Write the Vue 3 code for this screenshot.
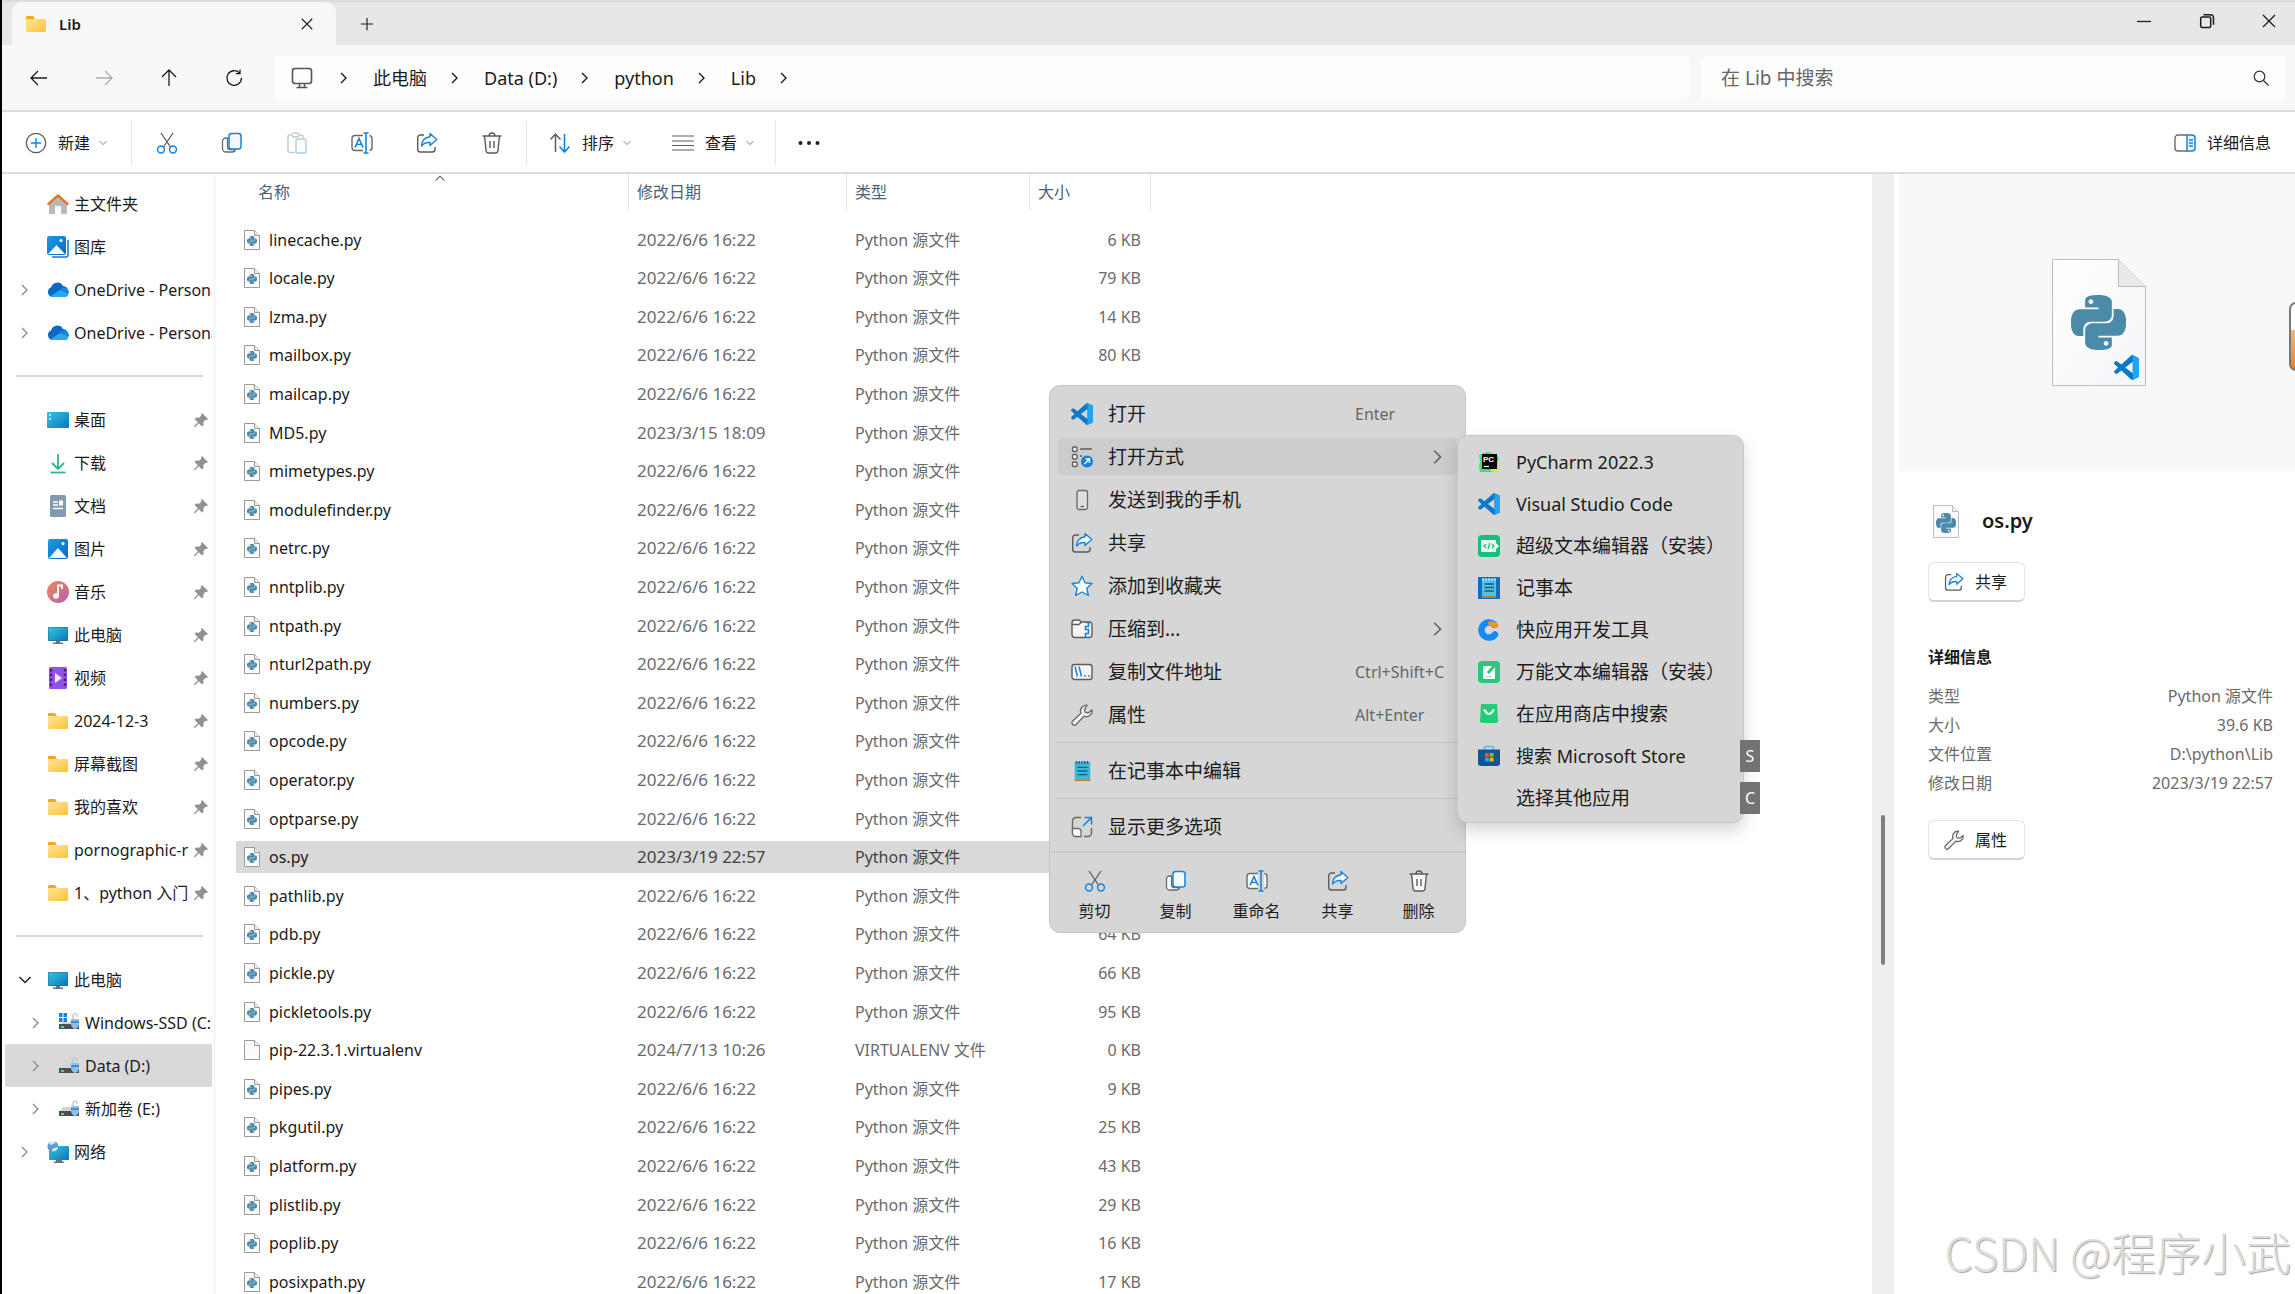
<template>
  <div class="explorer">
    <svg class="sprite" aria-hidden="true">
      <defs>
        <linearGradient id="g-folder" x1="0" y1="0" x2="1" y2="1"><stop offset="0" stop-color="#ffe49a" /><stop offset="1" stop-color="#fcc436" /></linearGradient>
        <linearGradient id="g-blue" x1="0" y1="0" x2="1" y2="1"><stop offset="0" stop-color="#1b9de8" /><stop offset="1" stop-color="#0b66c3" /></linearGradient>
        <linearGradient id="g-teal" x1="0" y1="0" x2="1" y2="1"><stop offset="0" stop-color="#2fc9e0" /><stop offset="1" stop-color="#0f74bb" /></linearGradient>
        <linearGradient id="g-music" x1="0" y1="0" x2="1" y2="1"><stop offset="0" stop-color="#f08a55" /><stop offset="1" stop-color="#b55fae" /></linearGradient>
        <linearGradient id="g-page" x1="0" y1="0" x2="1" y2="1"><stop offset="0" stop-color="#ffffff" /><stop offset="1" stop-color="#f3f6f9" /></linearGradient>
      </defs>
      <symbol id="folder" viewBox="0 0 22 18"><path d="M1 2a1 1 0 0 1 1-1h6l2 3H1z" fill="#eeaa1e" /><path d="M1 4h19a1 1 0 0 1 1 1v11a1 1 0 0 1-1 1H2a1 1 0 0 1-1-1z" fill="url(#g-folder)" /></symbol>
      <symbol id="home" viewBox="0 0 22 22"><path d="M2 10.500 11 3l9 7.500V21h-6v-8H8v8H2z" fill="#b9b9b9" /><path d="M1.500 11 11 2.500l9.500 8.500" fill="none" stroke="#e2762a" stroke-width="2.400" stroke-linecap="round" stroke-linejoin="round" /></symbol>
      <symbol id="gallery" viewBox="0 0 22 22"><path d="M21 4v15a2 2 0 0 1-2 2H5" fill="none" stroke="#1a76c8" stroke-width="1.500" /><rect width="19" height="19" rx="2" fill="url(#g-blue)" /><path d="m1 18 8.500-9 8.500 9z" fill="#f2f8ff" /><circle cx="14" cy="4.500" r="1.500" fill="#fff" /></symbol>
      <symbol id="picture" viewBox="0 0 22 22"><rect x="1" y="1" width="20" height="20" rx="2" fill="url(#g-blue)" /><path d="m2 20 9-10 9 10z" fill="#f2f8ff" /><circle cx="16" cy="5.500" r="1.500" fill="#fff" /></symbol>
      <symbol id="cloud" viewBox="0 0 22 22"><path d="M5 18a5 5 0 0 1-1-9.500 6.500 6.500 0 0 1 12-1.500 5.600 5.600 0 0 1 1 11z" fill="#0a69c4" /><path d="M3 17.500 13 11l8.500 3.200A3.700 3.700 0 0 1 18 18H5a5 5 0 0 1-2-.5z" fill="#2ba7ee" /><path d="M13 11c2-3.500 7-3 8.500.5.700 1.500.500 2.500 0 3z" fill="#1687da" /></symbol>
      <symbol id="desktop" viewBox="0 0 22 22"><rect x="0" y="3" width="22" height="16" rx="1" fill="url(#g-teal)" /><path d="M2 5h2v2H2zM2 9h2v2H2z" fill="#d6f6ff" opacity=".8" /></symbol>
      <symbol id="download" viewBox="0 0 22 22"><path d="M11 2v14M5 11l6 6 6-6" fill="none" stroke="#2cb58c" stroke-width="1.800" /><path d="M3.500 20.500h15" stroke="#2cb58c" stroke-width="1.800" /></symbol>
      <symbol id="document" viewBox="0 0 22 22"><rect x="3" y="0" width="16" height="22" rx="1.500" fill="#8399b1" /><path d="M6 7h5M6 10h5M6 13.500h10" stroke="#fff" stroke-width="1.400" /><rect x="12" y="5.500" width="4" height="5" fill="#fff" /></symbol>
      <symbol id="music" viewBox="0 0 22 22"><circle cx="11" cy="11" r="11" fill="url(#g-music)" /><circle cx="9" cy="15" r="2.800" fill="#fff" /><path d="M11 15V4.500h4V8" fill="none" stroke="#fff" stroke-width="1.800" /></symbol>
      <symbol id="pc" viewBox="0 0 22 22"><rect x="1" y="3" width="20" height="14" rx="1" fill="#3f5f73" /><rect x="1.500" y="3.500" width="19" height="13" fill="url(#g-teal)" /><path d="M9 17h4v1.500h3V20H6v-1.500h3z" fill="#66737c" /></symbol>
      <symbol id="video" viewBox="0 0 22 22"><rect x="2" y="0" width="18" height="22" rx="1.500" fill="#9351e6" /><path d="M4 2v18M18 2v18" stroke="#42207f" stroke-width="2.400" stroke-dasharray="2.400 2.400" /><path d="m8 6 7 5-7 5z" fill="#f3eaff" /></symbol>
      <symbol id="pin" viewBox="0 0 16 16"><path d="m9 1 6 6-1.200 1-1.200-.2-2.200 2.300.1 3-1.500 1.400-3.200-3.200L2 15l-1 .2L1.200 14l3.700-3.700L1.600 7l1.400-1.400 3 .2 2.400-2.400L8 2z" fill="#8f9192" /></symbol>
      <symbol id="drive" viewBox="0 0 22 22"><path d="m5 9-4 5h20V9z" fill="#d2d4d6" /><rect x="1" y="13" width="20" height="5" fill="#4a4f52" /><path d="M3 15h3v2H3z" fill="#4fe052" /><path d="M13 8h8v6q-1 3-4 4-3-1-4-4z" fill="#8fbfe2" /><path d="M13 11h8" stroke="#3f8ecb" stroke-width="2" /><path d="M15 8V5a2 2 0 0 1 4 0v1" fill="none" stroke="#b8bcbf" stroke-width="1.200" /></symbol>
      <symbol id="windrive" viewBox="0 0 22 22"><path d="m5 10-4 3h20V9z" fill="#d2d4d6" /><path d="M1 1h3.500v4H1zM5.500 1H9v4H5.500zM1 6h3.500v4H1zM5.500 6H9v4H5.500z" fill="#1584dc" /><rect x="1" y="12" width="20" height="5" fill="#4a4f52" /><path d="M3 14h3v2H3z" fill="#4fe052" /><path d="M13 7h8v6q-1 3-4 4-3-1-4-4z" fill="#8fbfe2" /><path d="M13 10h8" stroke="#3f8ecb" stroke-width="2" /><path d="M15 7V3.500a2 2 0 0 1 4 0V5" fill="none" stroke="#b8bcbf" stroke-width="1.200" /></symbol>
      <symbol id="network" viewBox="0 0 22 22"><rect x="2" y="5" width="20" height="14" rx="1" fill="url(#g-teal)" /><path d="M9 19h6v1.500h2V22H7v-1.500h2z" fill="#66737c" /><circle cx="6" cy="5.500" r="5.500" fill="#5f9fca" /><path d="M2 2.500C4 5 7 3 9 1c-3-2-6-1-7 1.500zM5 10c0-3 3-3 6-4-.5 3-3 5-6 4z" fill="#d8edf7" /></symbol>
      <symbol id="right" viewBox="0 0 16 16"><path d="m5 3 5 5-5 5" fill="none" stroke="currentColor" stroke-width="1.400" /></symbol>
      <symbol id="down" viewBox="0 0 16 16"><path d="m2.500 5 5.500 5.500L13.500 5" fill="none" stroke="currentColor" stroke-width="1.500" /></symbol>
      <symbol id="up" viewBox="0 0 16 16"><path d="m3 11 5-5 5 5" fill="none" stroke="currentColor" stroke-width="1.200" /></symbol>

      <symbol id="back" viewBox="0 0 20 20"><path d="M18 10H2M9 3 2 10l7 7" fill="none" stroke="currentColor" stroke-width="1.300" /></symbol>
      <symbol id="forward" viewBox="0 0 20 20"><path d="M2 10h16M11 3l7 7-7 7" fill="none" stroke="currentColor" stroke-width="1.300" /></symbol>
      <symbol id="upward" viewBox="0 0 20 20"><path d="M10 18V2M3 9l7-7 7 7" fill="none" stroke="currentColor" stroke-width="1.300" /></symbol>
      <symbol id="refresh" viewBox="0 0 20 20"><path d="M15.500 5A7.300 7.300 0 1 0 17.500 10M16 1.500v4.200h-4.200" fill="none" stroke="currentColor" stroke-width="1.300" /></symbol>
      <symbol id="monitor" viewBox="0 0 22 22"><rect x="1.500" y="1.500" width="19" height="15" rx="2.500" fill="none" stroke="#555" stroke-width="1.600" /><path d="M8.500 17v3M13.500 17v3M5.500 20.500h11" stroke="#555" stroke-width="1.500" /></symbol>
      <symbol id="close" viewBox="0 0 16 16"><path d="m2 2 12 12M14 2 2 14" stroke="currentColor" stroke-width="1.300" /></symbol>
      <symbol id="plus" viewBox="0 0 16 16"><path d="M8 1v14M1 8h14" stroke="currentColor" stroke-width="1.300" /></symbol>
      <symbol id="minimize" viewBox="0 0 16 16"><path d="M1 8.500h14" stroke="currentColor" stroke-width="1.300" /></symbol>
      <symbol id="restore" viewBox="0 0 16 16"><rect x="1.700" y="4" width="10" height="10.500" rx="1.500" fill="none" stroke="currentColor" stroke-width="1.500" /><path d="M4.500 1.700h7a3 3 0 0 1 3 3v7" fill="none" stroke="currentColor" stroke-width="1.500" /></symbol>
      <symbol id="search" viewBox="0 0 16 16"><circle cx="6.500" cy="6.500" r="5.300" fill="none" stroke="#333" stroke-width="1.200" /><path d="m10.500 10.500 5 5" stroke="#333" stroke-width="1.200" /></symbol>

      <symbol id="new" viewBox="0 0 22 22"><circle cx="11" cy="11" r="9.700" fill="none" stroke="#5c5c5c" stroke-width="1.300" /><path d="M11 6v10M6 11h10" stroke="#1583dc" stroke-width="1.400" /></symbol>
      <symbol id="cut" viewBox="0 0 22 22"><path d="M5 1l9.500 14M17 1 7.500 15" stroke="#5c5c5c" stroke-width="1.300" /><circle cx="5" cy="17.500" r="3.400" fill="none" stroke="#1583dc" stroke-width="1.500" /><circle cx="17" cy="17.500" r="3.400" fill="none" stroke="#1583dc" stroke-width="1.500" /></symbol>
      <symbol id="copy" viewBox="0 0 22 22"><path d="M6.500 6H5a3.500 3.500 0 0 0-3.500 3.500v7A3.500 3.500 0 0 0 5 20h6a3.500 3.500 0 0 0 3.500-2.500H9a2.500 2.500 0 0 1-2.500-2.500z" fill="#fff" stroke="#6a6a6a" stroke-width="1.300" /><rect x="8" y="1.500" width="12" height="15.500" rx="2.500" fill="#f4faff" stroke="#1583dc" stroke-width="1.500" /></symbol>
      <symbol id="paste" viewBox="0 0 22 22"><path d="M9 20.500H4A2 2 0 0 1 2 18V5a2 2 0 0 1 2-2h11a2 2 0 0 1 2 2v1" fill="none" stroke="#c9c9c9" stroke-width="1.400" /><rect x="6" y="1" width="7" height="4" rx="2" fill="#fff" stroke="#c9c9c9" stroke-width="1.300" /><rect x="10" y="7" width="10" height="14" rx="1.800" fill="#fff" stroke="#a9d0ef" stroke-width="1.400" /></symbol>
      <symbol id="rename" viewBox="0 0 22 22"><path d="M12 3.500H4A3 3 0 0 0 1 6.500v9a3 3 0 0 0 3 3h8M18.500 3.500a3 3 0 0 1 2.500 3v9a3 3 0 0 1-2.500 3" fill="#fff" stroke="#6a6a6a" stroke-width="1.400" /><path d="m4 15.500 4-9 4 9M5.500 12.500h5M12.500 1h5M12.500 21h5M15 1v20" fill="none" stroke="#1583dc" stroke-width="1.600" /></symbol>
      <symbol id="share" viewBox="0 0 22 22"><path d="M8 3H4.500A2.800 2.800 0 0 0 1.700 5.800v11.400A2.800 2.800 0 0 0 4.500 20h11.700a2.800 2.800 0 0 0 2.800-2.800V15" fill="none" stroke="#5c5c5c" stroke-width="1.400" /><path d="M14 1.500 20.800 7.500 14 13.500V10.500c-4-.3-6.500.8-8.500 3.500.3-5 3-8.500 8.500-9.200z" fill="#f4faff" stroke="#1583dc" stroke-width="1.400" stroke-linejoin="round" /></symbol>
      <symbol id="trash" viewBox="0 0 22 22"><path d="M3.500 4 5 18.500A2.500 2.500 0 0 0 7.500 21h7a2.500 2.500 0 0 0 2.500-2.500L18.500 4" fill="#f7f7f7" stroke="#5c5c5c" stroke-width="1.400" /><path d="M1.500 4h19M8 4a3 3 0 0 1 6 0M9 9v7M13 9v7" fill="none" stroke="#5c5c5c" stroke-width="1.400" /></symbol>
      <symbol id="sort" viewBox="0 0 22 22"><path d="M6.500 20V2M1.500 7.500 6.500 2l5 5.500" fill="none" stroke="#5c5c5c" stroke-width="1.500" /><path d="M15.500 2v18M10.500 14.500l5 5.500 5-5.500" fill="none" stroke="#1583dc" stroke-width="1.600" /></symbol>
      <symbol id="view" viewBox="0 0 22 22"><path d="M0 4h22M0 9h22M0 13.500h22M0 18h22" stroke="#5c5c5c" stroke-width="1.200" /></symbol>
      <symbol id="more" viewBox="0 0 22 22"><g fill="#222"><circle cx="2.500" cy="11" r="2" /><circle cx="11" cy="11" r="2" /><circle cx="19.500" cy="11" r="2" /></g></symbol>
      <symbol id="details" viewBox="0 0 22 22"><path d="M13 3H4a3 3 0 0 0-3 3v10a3 3 0 0 0 3 3h9" fill="none" stroke="#6a6a6a" stroke-width="1.400" /><path d="M13 3h5a3 3 0 0 1 3 3v10a3 3 0 0 1-3 3h-5z" fill="#e8f4fd" stroke="#1583dc" stroke-width="1.500" /><path d="M15 8h4M15 11h4M15 14h4" stroke="#1583dc" stroke-width="1.300" /></symbol>

      <symbol id="python" viewBox="0 0 24 24"><path fill="#4b8ba9" d="M14.25.18l.9.2.73.26.59.3.45.32.34.34.25.34.16.33.1.3.04.26.02.2-.01.13V8.5l-.05.63-.13.55-.21.46-.26.38-.3.31-.33.25-.35.19-.35.14-.33.1-.3.07-.26.04-.21.02H8.77l-.69.05-.59.14-.5.22-.41.27-.33.32-.27.35-.2.36-.15.37-.1.35-.07.32-.04.27-.02.21v3.06H3.17l-.21-.03-.28-.07-.32-.12-.35-.18-.36-.26-.36-.36-.35-.46-.32-.59-.28-.73-.21-.88-.14-1.05-.05-1.23.06-1.22.16-1.04.24-.87.32-.71.36-.57.4-.44.42-.33.42-.24.4-.16.36-.1.32-.05.24-.01h.16l.06.01h8.16v-.83H6.18l-.01-2.75-.02-.37.05-.34.11-.31.17-.28.25-.26.31-.23.38-.2.44-.18.51-.15.58-.12.64-.1.71-.06.77-.04.84-.02 1.27.05zm-6.3 1.98l-.23.33-.08.41.08.41.23.34.33.22.41.09.41-.09.33-.22.23-.34.08-.41-.08-.41-.23-.33-.33-.22-.41-.09-.41.09zm13.09 3.95l.28.06.32.12.35.18.36.27.36.35.35.47.32.59.28.73.21.88.14 1.04.05 1.23-.06 1.23-.16 1.04-.24.86-.32.71-.36.57-.4.45-.42.33-.42.24-.4.16-.36.09-.32.05-.24.02-.16-.01h-8.22v.82h5.84l.01 2.76.02.36-.05.34-.11.31-.17.29-.25.25-.31.24-.38.2-.44.17-.51.15-.58.13-.64.09-.71.07-.77.04-.84.01-1.27-.04-1.07-.14-.9-.2-.73-.25-.59-.3-.45-.33-.34-.34-.25-.34-.16-.33-.1-.3-.04-.25-.02-.2.01-.13v-5.34l.05-.64.13-.54.21-.46.26-.38.3-.32.33-.24.35-.2.35-.14.33-.1.3-.06.26-.04.21-.02.13-.01h5.84l.69-.05.59-.14.5-.21.41-.28.33-.32.27-.35.2-.36.15-.36.1-.35.07-.32.04-.28.02-.21V6.07h2.09l.14.01zm-6.47 14.25l-.23.33-.08.41.08.41.23.33.33.23.41.08.41-.08.33-.23.23-.33.08-.41-.08-.41-.23-.33-.33-.23-.41-.08-.41.08z" /></symbol>
      <symbol id="file" viewBox="0 0 16 20"><path d="M.5.500h10L15.500 5.500v14H.5z" fill="#fbfbfb" stroke="#9a9a9a" /><path d="M10.500.500v5h5" fill="#eee" stroke="#9a9a9a" /></symbol>
      <symbol id="pyfile" viewBox="0 0 16 20"><use href="#file" width="16" height="20" /><use href="#python" x="3" y="6" width="10" height="10" /></symbol>
      <symbol id="pyfile-mid" viewBox="0 0 26 33"><path d="M.5.500h19l6 6v26H.5z" fill="#fbfbfb" stroke="#bdbdbd" /><path d="M19.500.500v6h6" fill="#eee" stroke="#bdbdbd" /><use href="#python" x="3" y="8" width="20" height="20" /></symbol>
      <symbol id="pyfile-big" viewBox="0 0 94 127"><path d="M.5.500h66l27 27v99H.5z" fill="url(#g-page)" stroke="#bdbdbd" /><path d="M66.500.500v27h27" fill="#e9e9e9" stroke="#bdbdbd" /><use href="#python" x="19" y="35" width="55" height="57" /><use href="#vscode" x="62" y="96" width="25" height="25" /></symbol>
      <symbol id="vscode" viewBox="0 0 24 24"><path d="M23.150 2.587 18.210.210a1.494 1.494 0 0 0-1.705.290l-9.460 8.630-4.120-3.128a1 1 0 0 0-1.276.057L.327 7.261A1 1 0 0 0 .326 8.740L3.899 12 .326 15.260a1 1 0 0 0 .001 1.479L1.650 17.940a1 1 0 0 0 1.276.057l4.120-3.128 9.460 8.630a1.492 1.492 0 0 0 1.704.290l4.942-2.377A1.500 1.500 0 0 0 24 20.060V3.939a1.500 1.500 0 0 0-.85-1.352zm-5.146 14.861L10.826 12l7.178-5.448z" fill="#0b78c8" /><path d="M18 .200 23.150 2.600A1.500 1.500 0 0 1 24 3.940v16.120a1.500 1.500 0 0 1-.85 1.350L18 23.800z" fill="#23a3f0" /></symbol>

      <symbol id="openwith" viewBox="0 0 22 22"><g fill="#f4f4f4" stroke="#5c5c5c" stroke-width="1.300"><rect x="1.500" y="1" width="4.500" height="4.500" rx="1" /><rect x="1.500" y="8.500" width="4.500" height="4.500" rx="1" /><rect x="1.500" y="16" width="4.500" height="4.500" rx="1" /></g><path d="M9 3h12M9 10h2" stroke="#5c5c5c" stroke-width="1.400" /><circle cx="16" cy="15.500" r="6" fill="#1480da" /><path d="m13.500 18 4.500-4.500M14.500 13H18.500v4" fill="none" stroke="#fff" stroke-width="1.400" /></symbol>
      <symbol id="phone" viewBox="0 0 22 22"><rect x="6" y="1.500" width="10.500" height="19" rx="2" fill="#dedede" stroke="#6a6a6a" stroke-width="1.300" /><path d="M9.500 17.500h3.500" stroke="#555" stroke-width="1.200" /></symbol>
      <symbol id="star" viewBox="0 0 22 22"><path d="m11 1.200 3 6.500 7 .8-5.200 4.800 1.500 7.200L11 17l-6.300 3.500 1.500-7.200L1 8.500l7-.8z" fill="#f8fbff" stroke="#1583dc" stroke-width="1.400" stroke-linejoin="round" /></symbol>
      <symbol id="zip" viewBox="0 0 22 22"><path d="M1 5a3 3 0 0 1 3-3h4l2.500 2H18a3 3 0 0 1 3 3v9.500a3 3 0 0 1-3 3H4a3 3 0 0 1-3-3z" fill="#f6f6f6" stroke="#5c5c5c" stroke-width="1.400" /><path d="M1 6.500h7L10.500 4" fill="none" stroke="#5c5c5c" stroke-width="1.300" /><path d="M14.500 4.500h3v4h-3v3h3v4h-3v4" fill="none" stroke="#1583dc" stroke-width="1.600" /></symbol>
      <symbol id="path" viewBox="0 0 22 22"><rect x="1" y="3.500" width="20" height="15" rx="2.500" fill="#f6f6f6" stroke="#5c5c5c" stroke-width="1.400" /><path d="m4 5.500 2.500 10M8 5.500l2.500 10M13 15h1.800M17 15h1.800" stroke="#1583dc" stroke-width="1.500" /></symbol>
      <symbol id="wrench" viewBox="0 0 22 22"><path d="M16 1.200a5.800 5.800 0 0 0-6 8L1.700 17a2.400 2.400 0 0 0 3.400 3.400L13 12.200a5.800 5.800 0 0 0 8-6.200l-3.800 3-3-.7-.7-3z" fill="#f4f4f4" stroke="#6a6a6a" stroke-width="1.400" stroke-linejoin="round" /></symbol>
      <symbol id="notepad" viewBox="0 0 22 24"><rect x="3" y="2" width="17" height="19" fill="#3cb9d8" /><path d="M3 21h17v2H3z" fill="#c9762c" /><path d="M5 1v3M8 1v3M11 1v3M14 1v3M17 1v3" stroke="#155e80" stroke-width="1.400" /><path d="M6 8h11M6 12h11M6 16h11" stroke="#14617f" stroke-width="1.500" /></symbol>
      <symbol id="expand" viewBox="0 0 22 22"><path d="M10 1.500H5A3.500 3.500 0 0 0 1.500 5v12A3.500 3.500 0 0 0 5 20.500h2M20.500 12v5a3.500 3.500 0 0 1-3.500 3.500h-4" fill="none" stroke="#6a6a6a" stroke-width="1.400" /><path d="M1.500 12.500H7a3 3 0 0 1 3 3v5H5A3.500 3.500 0 0 1 1.500 17z" fill="#fff" stroke="#6a6a6a" stroke-width="1.300" /><path d="M12 10 20.500 1.500M13.500 1.500h7v7" fill="none" stroke="#1583dc" stroke-width="1.500" /></symbol>

      <symbol id="pycharm" viewBox="0 0 22 22"><path d="m1 4 8-3 9 1 3 7-2 4 2 5-3 3H2l-1-5 1-6z" fill="#3ce07d" /><path d="m12 2 6 0 3 7-2 2zM18 12l3 6-3 3-6-1z" fill="#d8f04c" /><path d="m17 3 4 4-2 4z" fill="#1fc6cf" /><rect x="4" y="3" width="15" height="15" fill="#050505" /><text x="5" y="11" font-size="8" font-weight="700" fill="#fff" font-family="Liberation Sans">PC</text><path d="M6 15.500h5" stroke="#fff" stroke-width="1.200" /></symbol>
      <symbol id="supertext" viewBox="0 0 22 22"><rect width="22" height="22" rx="4" fill="#12c17b" /><path d="M4 5h14v3l3 3-3 3v3H4a1 1 0 0 1-1-1V6a1 1 0 0 1 1-1z" fill="#eefcf5" /><path d="m8 9-2 2 2 2M14 9l2 2-2 2M12 8l-2 6" fill="none" stroke="#12c17b" stroke-width="1.300" /></symbol>
      <symbol id="notebook" viewBox="0 0 22 22"><rect width="22" height="22" fill="#0e6fbe" /><path d="M4 2h14v17H4z" fill="#54c0e6" /><path d="M4 19h14v2H4z" fill="#c9762c" /><path d="M5 1v2.500M8 1v2.500M11 1v2.500M14 1v2.500M17 1v2.500" stroke="#cdeefb" stroke-width="1.300" /><path d="M6.500 7h9.500M6.500 10.500h9.500M6.500 14h9.500" stroke="#155e80" stroke-width="1.300" /></symbol>
      <symbol id="quickapp" viewBox="0 0 22 22"><path d="M16 5.500A7.500 7.500 0 1 0 17 15.500" fill="none" stroke="#138bf5" stroke-width="6.500" stroke-linecap="round" /><path d="M10 3c4-2 8 0 10 2.500 1.500 2-1.500 4.500-3.500 3.500-2-2-3.500-2-5.500-2z" fill="#f7931e" /></symbol>
      <symbol id="alltext" viewBox="0 0 22 22"><rect width="22" height="22" rx="4" fill="#2fc57f" /><rect x="5" y="5" width="12" height="13" rx="1" fill="#fff" /><path d="m10 12 7-8" stroke="#2fc57f" stroke-width="3" /><path d="M8 15.500h6" stroke="#9fdfc0" stroke-width="1.300" /></symbol>
      <symbol id="appstore" viewBox="0 0 22 22"><path d="M3 1h16l1 17a2 2 0 0 1-2 2H4a2 2 0 0 1-2-2z" fill="#1fce76" /><path d="M6.500 7q4.500 8 9 0" fill="none" stroke="#fff" stroke-width="2" stroke-linecap="round" /></symbol>
      <symbol id="msstore" viewBox="0 0 22 22"><path d="M6.500 5V3a1.500 1.500 0 0 1 1.500-1.500h6A1.500 1.500 0 0 1 15.500 3v2" fill="none" stroke="#45bdf0" stroke-width="1.600" /><path d="M0 4.500h22V18a3 3 0 0 1-3 3H3a3 3 0 0 1-3-3z" fill="#17538f" /><path d="M7 8h3.800v3.800H7z" fill="#f0552b" /><path d="M11.700 8h3.800v3.800h-3.800z" fill="#84bf1d" /><path d="M7 12.700h3.800v3.800H7z" fill="#26a9ef" /><path d="M11.700 12.700h3.800v3.800h-3.800z" fill="#fcb916" /></symbol>
      <symbol id="none" viewBox="0 0 22 22" />
    </svg>

    <header class="titlebar">
      <div class="tab">
        <svg class="tabicon"><use href="#folder" /></svg>
        <span>Lib</span>
        <button class="tabclose" aria-label="关闭标签页"><svg class="s14"><use href="#close" /></svg></button>
      </div>
      <button class="newtab" aria-label="新标签页"><svg class="s14"><use href="#plus" /></svg></button>
      <div class="winbtns">
        <button v-for="w in ventana" :key="w" :aria-label="w"><svg class="s16"><use :href="'#' + w" /></svg></button>
      </div>
    </header>

    <nav class="navbar">
      <button v-for="n in navegar" :key="n" class="navbtn" :class="n" :aria-label="n"><svg class="s20"><use :href="'#' + n" /></svg></button>
      <div class="address">
        <svg class="s22 monitor"><use href="#monitor" /></svg>
        <template v-for="c in ruta" :key="c">
          <svg class="sep"><use href="#right" /></svg>
          <a href="#">{{ c }}</a>
        </template>
        <svg class="sep"><use href="#right" /></svg>
      </div>
      <label class="search">
        <input type="text" placeholder="在 Lib 中搜索" aria-label="在 Lib 中搜索">
        <svg class="s16"><use href="#search" /></svg>
      </label>
    </nav>

    <div class="toolbar">
      <button class="tool"><svg class="s22"><use href="#new" /></svg>新建<svg class="drop"><use href="#down" /></svg></button>
      <div class="group">
        <button v-for="t in herramientas" :key="t" class="iconbtn" :aria-label="t"><svg class="s22"><use :href="'#' + t" /></svg></button>
      </div>
      <button class="tool"><svg class="s22"><use href="#sort" /></svg>排序<svg class="drop"><use href="#down" /></svg></button>
      <button class="tool"><svg class="s22"><use href="#view" /></svg>查看<svg class="drop"><use href="#down" /></svg></button>
      <i class="divider"></i>
      <button class="iconbtn" aria-label="更多"><svg class="s22"><use href="#more" /></svg></button>
      <button class="tool detbtn"><svg class="s22"><use href="#details" /></svg>详细信息</button>
    </div>

    <main class="content">
      <aside class="sidebar">
        <template v-for="(s, i) in arbol" :key="i">
          <hr v-if="!s.texto">
          <a v-else href="#" class="node" :class="{ nivel: s.nivel, activo: s.activo }">
            <svg class="flecha" :class="{ abierto: s.flecha === 'down' }"><use v-if="s.flecha" :href="'#' + s.flecha" /></svg>
            <svg class="s22"><use :href="'#' + s.icono" /></svg>
            <span class="nombre">{{ s.texto }}</span>
            <svg v-if="s.pin" class="pin"><use href="#pin" /></svg>
          </a>
        </template>
      </aside>

      <section class="files">
        <table>
          <colgroup><col class="c1"><col class="c2"><col class="c3"><col class="c4"></colgroup>
          <thead>
            <tr>
              <th class="first"><button>名称<svg class="caret"><use href="#up" /></svg></button></th>
              <th><button>修改日期</button></th>
              <th><button>类型</button></th>
              <th><button>大小</button></th>
            </tr>
          </thead>
          <tbody>
            <tr v-for="f in archivos" :key="f[0]" :class="{ activo: f[0] === 'os.py' }">
              <td class="fname"><div><svg class="fileicon"><use :href="f[3] ? '#file' : '#pyfile'" /></svg>{{ f[0] }}</div></td>
              <td class="fecha">{{ f[1] || '2022/6/6 16:22' }}</td>
              <td>{{ f[3] || 'Python 源文件' }}</td>
              <td class="tam">{{ f[2] }}</td>
            </tr>
          </tbody>
        </table>
      </section>

      <div class="scrollbar"><div class="thumb"></div></div>

      <aside class="details">
        <div class="preview">
          <svg class="bigfile"><use href="#pyfile-big" /></svg>
          <div class="floating"></div>
        </div>
        <div class="info">
          <h2><svg class="midfile"><use href="#pyfile-mid" /></svg>os.py</h2>
          <button class="action"><svg class="s20"><use href="#share" /></svg>共享</button>
          <h3>详细信息</h3>
          <dl>
            <div v-for="d in datos" :key="d[0]"><dt>{{ d[0] }}</dt><dd>{{ d[1] }}</dd></div>
          </dl>
          <button class="action"><svg class="s20"><use href="#wrench" /></svg>属性</button>
        </div>
      </aside>
    </main>

    <div class="menu">
      <template v-for="(m, i) in menu" :key="i">
        <hr v-if="!m.texto">
        <button v-else class="item" :class="{ hover: m.hover }">
          <svg class="s22"><use :href="'#' + m.icono" /></svg>
          <span>{{ m.texto }}</span>
          <kbd v-if="m.tecla">{{ m.tecla }}</kbd>
          <svg v-if="m.sub" class="s20 arrow"><use href="#right" /></svg>
        </button>
      </template>
      <div class="quick">
        <button v-for="r in rapido" :key="r[0]"><svg class="s22"><use :href="'#' + r[0]" /></svg>{{ r[1] }}</button>
      </div>
    </div>

    <div class="submenu">
      <button v-for="a in apps" :key="a[1]" class="app">
        <svg class="s22"><use :href="'#' + a[0]" /></svg>
        <span :class="{ latin: a[2] }">{{ a[1] }}</span>
        <kbd v-if="a[3]">{{ a[3] }}</kbd>
      </button>
    </div>

    <div class="watermark">CSDN @程序小武</div>
  </div>
</template>

<script setup>
import { ref } from 'vue';

const ventana = ['minimize', 'restore', 'close'];
const navegar = ['back', 'forward', 'upward', 'refresh'];
const herramientas = ['cut', 'copy', 'paste', 'rename', 'share', 'trash'];
const ruta = ref(['此电脑', 'Data (D:)', 'python', 'Lib']);

const arbol = ref([
  { icono: 'home', texto: '主文件夹' },
  { icono: 'gallery', texto: '图库' },
  { icono: 'cloud', texto: 'OneDrive - Personal', flecha: 'right' },
  { icono: 'cloud', texto: 'OneDrive - Personal', flecha: 'right' },
  {},
  { icono: 'desktop', texto: '桌面', pin: true },
  { icono: 'download', texto: '下载', pin: true },
  { icono: 'document', texto: '文档', pin: true },
  { icono: 'picture', texto: '图片', pin: true },
  { icono: 'music', texto: '音乐', pin: true },
  { icono: 'pc', texto: '此电脑', pin: true },
  { icono: 'video', texto: '视频', pin: true },
  { icono: 'folder', texto: '2024-12-3', pin: true },
  { icono: 'folder', texto: '屏幕截图', pin: true },
  { icono: 'folder', texto: '我的喜欢', pin: true },
  { icono: 'folder', texto: 'pornographic-r', pin: true },
  { icono: 'folder', texto: '1、python 入门', pin: true },
  {},
  { icono: 'pc', texto: '此电脑', flecha: 'down' },
  { icono: 'windrive', texto: 'Windows-SSD (C:)', flecha: 'right', nivel: true },
  { icono: 'drive', texto: 'Data (D:)', flecha: 'right', nivel: true, activo: true },
  { icono: 'drive', texto: '新加卷 (E:)', flecha: 'right', nivel: true },
  { icono: 'network', texto: '网络', flecha: 'right' }
]);

// nombre, fecha, tamaño, tipo
const archivos = ref([
  ['linecache.py', '', '6 KB'],
  ['locale.py', '', '79 KB'],
  ['lzma.py', '', '14 KB'],
  ['mailbox.py', '', '80 KB'],
  ['mailcap.py', '', ''],
  ['MD5.py', '2023/3/15 18:09', ''],
  ['mimetypes.py', '', ''],
  ['modulefinder.py', '', ''],
  ['netrc.py', '', ''],
  ['nntplib.py', '', ''],
  ['ntpath.py', '', ''],
  ['nturl2path.py', '', ''],
  ['numbers.py', '', ''],
  ['opcode.py', '', ''],
  ['operator.py', '', ''],
  ['optparse.py', '', ''],
  ['os.py', '2023/3/19 22:57', ''],
  ['pathlib.py', '', ''],
  ['pdb.py', '', '64 KB'],
  ['pickle.py', '', '66 KB'],
  ['pickletools.py', '', '95 KB'],
  ['pip-22.3.1.virtualenv', '2024/7/13 10:26', '0 KB', 'VIRTUALENV 文件'],
  ['pipes.py', '', '9 KB'],
  ['pkgutil.py', '', '25 KB'],
  ['platform.py', '', '43 KB'],
  ['plistlib.py', '', '29 KB'],
  ['poplib.py', '', '16 KB'],
  ['posixpath.py', '', '17 KB']
]);

const datos = [
  ['类型', 'Python 源文件'],
  ['大小', '39.6 KB'],
  ['文件位置', 'D:\\python\\Lib'],
  ['修改日期', '2023/3/19 22:57']
];

const menu = [
  { icono: 'vscode', texto: '打开', tecla: 'Enter' },
  { icono: 'openwith', texto: '打开方式', sub: true, hover: true },
  { icono: 'phone', texto: '发送到我的手机' },
  { icono: 'share', texto: '共享' },
  { icono: 'star', texto: '添加到收藏夹' },
  { icono: 'zip', texto: '压缩到...', sub: true },
  { icono: 'path', texto: '复制文件地址', tecla: 'Ctrl+Shift+C' },
  { icono: 'wrench', texto: '属性', tecla: 'Alt+Enter' },
  {},
  { icono: 'notepad', texto: '在记事本中编辑' },
  {},
  { icono: 'expand', texto: '显示更多选项' }
];

const rapido = [['cut', '剪切'], ['copy', '复制'], ['rename', '重命名'], ['share', '共享'], ['trash', '删除']];

const apps = [
  ['pycharm', 'PyCharm 2022.3', true],
  ['vscode', 'Visual Studio Code', true],
  ['supertext', '超级文本编辑器（安装）'],
  ['notebook', '记事本'],
  ['quickapp', '快应用开发工具'],
  ['alltext', '万能文本编辑器（安装）'],
  ['appstore', '在应用商店中搜索'],
  ['msstore', '搜索 Microsoft Store', true, 'S'],
  ['none', '选择其他应用', false, 'C']
];
</script>

<style>
body{
  margin: 0;
}
</style>

<style scoped>
.explorer{
  position: relative;
  display: flex;
  flex-direction: column;
  height: 100vh;
  box-sizing: border-box;
  border-left: 2px solid #000;
  overflow: hidden;
  background: #fff;
  color: #1b1b1b;
  font-family: "Noto Sans", "Noto Sans CJK SC", sans-serif;
  font-size: 16px;
  line-height: 24px;
}
.explorer *{
  box-sizing: border-box;
}
.sprite{
  position: absolute;
  width: 0;
  height: 0;
}
svg{
  flex: none;
  display: block;
}
button{
  border: 0;
  padding: 0;
  background: none;
  font: inherit;
  color: inherit;
  display: flex;
  align-items: center;
}
a{
  color: inherit;
  text-decoration: none;
}
.s14{ width: 14px; height: 14px; }
.s16{ width: 16px; height: 16px; }
.s20{ width: 20px; height: 20px; }
.s22{ width: 22px; height: 22px; }

.titlebar{
  display: flex;
  flex: none;
  height: 45px;
  padding-left: 10px;
  background: #e7e7e7;
  border-top: 2px solid #dcdcdc;
}
.tab{
  display: flex;
  align-items: center;
  width: 324px;
  padding: 0 22px 0 13px;
  border-radius: 10px 10px 0 0;
  background: #f8f8f8;
  font-size: 15px;
  font-weight: 600;
}
.tabicon{
  width: 22px;
  height: 18px;
  margin-right: 12px;
}
.tabclose{
  margin-left: auto;
}
.newtab{
  width: 62px;
  justify-content: center;
}
.winbtns{
  display: flex;
  margin-left: auto;
  height: 37px;
}
.winbtns button{
  width: 63px;
  justify-content: center;
}
.winbtns button:last-child{
  width: 57px;
  padding-left: 4px;
}

.navbar{
  display: flex;
  flex: none;
  align-items: center;
  height: 67px;
  padding: 0 10px 0 4px;
  background: #f8f8f8;
  border-bottom: 2px solid #dcdcdc;
}
.navbtn{
  width: 65px;
  height: 44px;
  justify-content: center;
}
.forward{
  color: #aaa;
}
.address{
  display: flex;
  flex: 1;
  align-items: center;
  height: 44px;
  margin: 0 12px 0 9px;
  padding-left: 16px;
  border-radius: 5px;
  background: #fdfdfd;
  font-size: 18px;
}
.monitor{
  margin-right: 3px;
}
.sep{
  width: 16px;
  height: 16px;
  margin: 0 21px 0 20px;
}
.search{
  display: flex;
  align-items: center;
  width: 584px;
  height: 44px;
  padding: 0 16px 0 20px;
  border-radius: 5px;
  background: #fdfdfd;
}
.search input{
  flex: 1;
  border: 0;
  padding: 0;
  outline: 0;
  background: none;
  font: inherit;
  font-size: 19px;
}
.search input::placeholder{
  color: #666;
}

.toolbar{
  display: flex;
  flex: none;
  align-items: center;
  height: 62px;
  padding: 2px 24px 0 3px;
  border-bottom: 2px solid #dcdcdc;
}
.tool{
  height: 44px;
  padding: 0 18px 0 20px;
  gap: 11px;
}
.drop{
  width: 10px;
  height: 10px;
  color: #777;
  margin-left: -3px;
  margin-right: 2px;
}
.divider{
  width: 1px;
  height: 44px;
  background: #e8e8e8;
}
.group{
  display: flex;
  margin: 0 2px 0 3px;
  padding: 0 2px;
  border: 1px solid #e8e8e8;
  border-width: 0 1px;
}
.iconbtn{
  width: 65px;
  height: 44px;
  justify-content: center;
}
.detbtn{
  margin-left: auto;
  padding: 0;
}

.content{
  display: flex;
  flex: 1;
  min-height: 0;
}
.sidebar{
  flex: none;
  width: 213px;
  padding: 8px 2px 0 3px;
  border-right: 1px solid #f1f1f1;
}
.sidebar hr{
  height: 2px;
  margin: 21px 9px 21px 11px;
  border: 0;
  background: #d9d9d9;
}
.node{
  display: flex;
  align-items: center;
  height: 43px;
  padding-left: 12px;
}
.nivel{
  padding-left: 23px;
}
.node.activo{
  background: #d9d9d9;
  border-radius: 2px;
}
.flecha{
  width: 16px;
  height: 16px;
  margin-right: 14px;
  color: #8c8c8c;
}
.abierto{
  color: #222;
}
.nombre{
  flex: 1;
  margin-left: 5px;
  overflow: hidden;
  white-space: nowrap;
}
.pin{
  width: 16px;
  height: 16px;
  margin: 0 3px 0 2px;
}

.files{
  flex: 1;
  min-width: 0;
  overflow: hidden;
  padding-left: 21px;
}
table{
  width: 915px;
  table-layout: fixed;
  border-spacing: 0;
}
.c1{ width: 393px; }
.c2{ width: 218px; }
.c3{ width: 183px; }
.c4{ width: 121px; }
th{
  height: 46px;
  padding: 0;
  vertical-align: top;
  font-weight: 400;
  color: #4c607a;
}
th button{
  position: relative;
  width: 100%;
  height: 36px;
  padding-left: 8px;
  border-right: 1px solid #e4e4e4;
}
.first button{
  padding-left: 22px;
}
.caret{
  position: absolute;
  top: -3px;
  left: 197px;
  width: 14px;
  height: 14px;
  color: #555;
}
td{
  height: 39px;
  padding: 0 0 0 8px;
  border: 0 solid transparent;
  border-width: 3px 0;
  background-clip: padding-box;
  line-height: 22px;
  color: #6b6b6b;
}
/* la fila mide 38.6px de media */
tr:nth-child(5n+2) td,
tr:nth-child(5n+4) td{
  height: 38px;
}
.fname{
  color: #1b1b1b;
}
.fname div{
  display: flex;
  align-items: center;
  gap: 9px;
}
.fileicon{
  width: 16px;
  height: 20px;
}
.fecha{
  font-size: 17px;
}
.tam{
  padding-right: 10px;
  text-align: right;
}
tr.activo td{
  background-color: #d9d9d9;
  color: #444;
}
tr.activo .fname{
  color: #1b1b1b;
}

.scrollbar{
  flex: none;
  width: 22px;
  padding: 641px 9px 0;
  background: #efefef;
}
.thumb{
  height: 150px;
  border-radius: 2px;
  background: #808080;
}

.details{
  flex: none;
  width: 401px;
  padding-left: 5px;
}
.preview{
  position: relative;
  display: flex;
  justify-content: center;
  align-items: center;
  height: 297px;
  padding-left: 4px;
  background: #f8f8f8;
}
.bigfile{
  width: 94px;
  height: 127px;
}
.floating{
  position: absolute;
  right: -20px;
  top: 128px;
  width: 26px;
  height: 69px;
  border: 2px solid #777;
  border-radius: 7px;
  background: linear-gradient(#fff 40%, #f9b57a 40%, #f07f22);
}
.info{
  padding: 33px 22px 0 29px;
}
h2{
  display: flex;
  align-items: center;
  gap: 23px;
  margin: 0 0 24px 5px;
  font-size: 20px;
  line-height: 34px;
  font-weight: 600;
}
.midfile{
  width: 26px;
  height: 33px;
}
.action{
  width: 97px;
  height: 40px;
  gap: 11px;
  padding-left: 15px;
  border: 1px solid #e3e3e3;
  border-bottom: 2px solid #d4d4d4;
  border-radius: 6px;
}
h3{
  margin: 43px 0 12px;
  font-size: 16px;
  line-height: 24px;
}
dl{
  margin: 0 0 23px;
}
dl div{
  display: flex;
  justify-content: space-between;
  height: 29px;
  align-items: center;
  color: #6b6b6b;
}
dd{
  margin: 0;
}

.menu{
  position: absolute;
  left: 1047px;
  top: 385px;
  width: 417px;
  padding-top: 6px;
  border: 1px solid #c4c4c4;
  border-radius: 11px;
  background: #d6d6d6;
}
.menu hr{
  height: 1px;
  margin: 6px;
  border: 0;
  background: #c2c2c2;
}
.item{
  position: relative;
  width: 100%;
  height: 43px;
  padding-left: 21px;
  gap: 15px;
  font-size: 19px;
}
.hover::before{
  content: "";
  position: absolute;
  z-index: -1;
  inset: 3px 8px;
  border-radius: 5px;
  background: #cccccc;
}
.hover{
  z-index: 0;
}
kbd{
  font: inherit;
}
.item kbd{
  position: absolute;
  left: 305px;
  font-size: 16px;
  color: #666;
}
.arrow{
  margin-left: auto;
  margin-right: 17px;
  color: #666;
}
.quick{
  display: flex;
  margin-top: 3px;
  padding: 17px 6px 9px 4px;
  border-top: 2px solid #cacaca;
}
.quick button{
  flex: 1;
  flex-direction: column;
  gap: 7px;
}

.submenu{
  position: absolute;
  left: 1455px;
  top: 435px;
  width: 287px;
  padding: 5px 0 3px;
  border: 1px solid #c8c8c8;
  border-radius: 11px;
  background: #d6d6d6;
  box-shadow: 0 8px 16px rgba(0, 0, 0, .16);
}
.app{
  position: relative;
  width: 100%;
  height: 42px;
  padding-left: 20px;
  gap: 16px;
  font-size: 19px;
  white-space: nowrap;
}
.latin{
  font-size: 18px;
}
.app kbd{
  position: absolute;
  left: 282px;
  width: 20px;
  font-size: 16px;
  line-height: 32px;
  text-align: center;
  color: #fff;
  background: #737373;
}

.watermark{
  position: absolute;
  right: 4px;
  bottom: 12px;
  font-family: "Noto Sans CJK SC", sans-serif;
  font-size: 45px;
  font-weight: 300;
  line-height: 60px;
  color: #dcdcdc;
  text-shadow: 1px 1px 1px #a8a8a8;
}
</style>
